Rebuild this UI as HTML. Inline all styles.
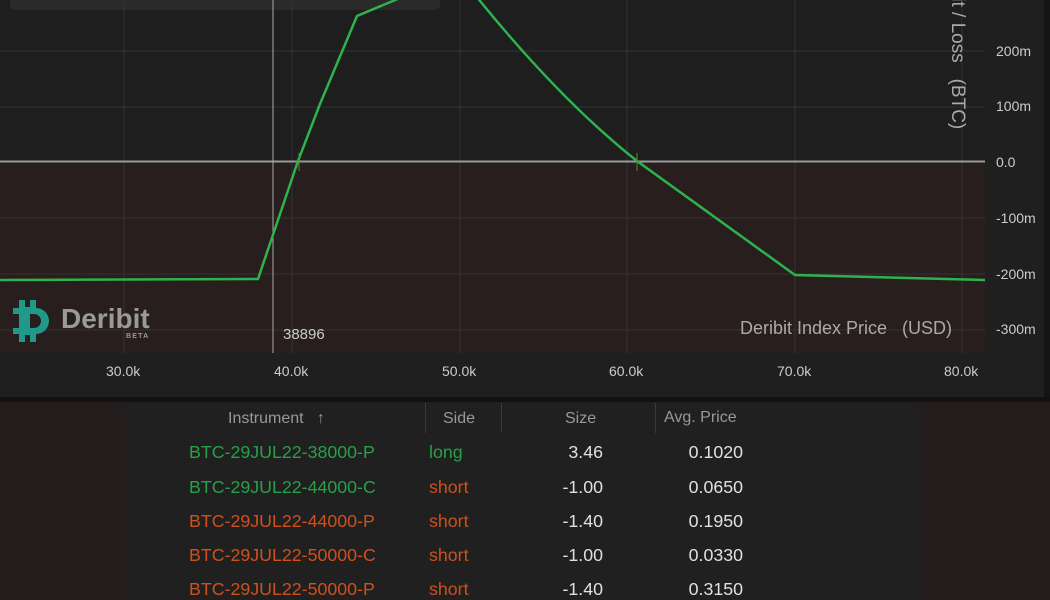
<!DOCTYPE html><html><head><style>
body{margin:0;width:1050px;height:600px;overflow:hidden;background:#241d1d;font-family:"Liberation Sans",sans-serif;position:relative}
.a{position:absolute}
.t{position:absolute;font-size:17.8px;white-space:nowrap}
.n{position:absolute;font-size:17.8px;white-space:nowrap;text-align:right;color:#e0e0e0}
.g{color:#27a04a}.r{color:#d0501c}
</style></head><body>
<div class="a" style="left:0;top:0;width:1044px;height:398px;background:#1f1f1f"></div>
<div class="a" style="left:1044px;top:0;width:6px;height:400px;background:#141414"></div>
<div class="a" style="left:0;top:397px;width:1050px;height:5px;background:#121212"></div>
<svg class="a" style="left:0;top:0" width="1050" height="400">
<rect x="0" y="0" width="985" height="161" fill="#1e1e1e"/>
<rect x="0" y="161" width="985" height="192" fill="#281e1e"/>
<rect x="10" y="-10" width="430" height="20" rx="5" fill="#2a2a2a"/>
<g stroke="#333" stroke-width="1">
<line x1="124" y1="0" x2="124" y2="353"/><line x1="292" y1="0" x2="292" y2="353"/><line x1="460" y1="0" x2="460" y2="353"/><line x1="627" y1="0" x2="627" y2="353"/><line x1="795" y1="0" x2="795" y2="353"/><line x1="962" y1="0" x2="962" y2="353"/>
<line x1="0" y1="51" x2="985" y2="51"/><line x1="0" y1="107" x2="985" y2="107"/><line x1="0" y1="218" x2="985" y2="218"/><line x1="0" y1="274" x2="985" y2="274"/><line x1="0" y1="330" x2="985" y2="330"/>
</g>
<line x1="0" y1="161.5" x2="985" y2="161.5" stroke="#9a9a9a" stroke-width="2"/>
<line x1="273" y1="0" x2="273" y2="353" stroke="#aaa" stroke-width="1"/>
<polyline fill="none" stroke="#2db34e" stroke-width="2.5" points="0,280 258,279 298,161 320,104 357,16 400,-2"/>
<path d="M476,-4 Q560,100 637,161 L795,275 L985,280" fill="none" stroke="#2db34e" stroke-width="2.5"/>
<line x1="299" y1="153" x2="299" y2="171" stroke="#5a8a30"/><line x1="637" y1="153" x2="637" y2="171" stroke="#5a8a30"/>
</svg>
<div class="t" style="left:283px;top:326px;font-size:15px;color:#ccc">38896</div>
<div class="t" style="left:740px;top:318px;font-size:18px;color:#aaa">Deribit Index Price&nbsp;&nbsp;&nbsp;(USD)</div>
<div class="t" style="top:-8px;font-size:19px;color:#aaa;transform:rotate(90deg);transform-origin:0 0;left:968px">fit / Loss&nbsp;&nbsp;&nbsp;(BTC)</div>
<div class="t" style="left:996px;top:43px;font-size:14px;color:#ccc">200m</div>
<div class="t" style="left:996px;top:98px;font-size:14px;color:#ccc">100m</div>
<div class="t" style="left:996px;top:154px;font-size:14px;color:#ccc">0.0</div>
<div class="t" style="left:996px;top:210px;font-size:14px;color:#ccc">-100m</div>
<div class="t" style="left:996px;top:266px;font-size:14px;color:#ccc">-200m</div>
<div class="t" style="left:996px;top:321px;font-size:14px;color:#ccc">-300m</div>
<div class="t" style="left:106px;top:363px;font-size:14px;color:#ccc">30.0k</div>
<div class="t" style="left:274px;top:363px;font-size:14px;color:#ccc">40.0k</div>
<div class="t" style="left:442px;top:363px;font-size:14px;color:#ccc">50.0k</div>
<div class="t" style="left:609px;top:363px;font-size:14px;color:#ccc">60.0k</div>
<div class="t" style="left:777px;top:363px;font-size:14px;color:#ccc">70.0k</div>
<div class="t" style="left:944px;top:363px;font-size:14px;color:#ccc">80.0k</div>
<svg class="a" style="left:13px;top:300px" width="42" height="42"><path d="M6,0h6v7h5v-7h6v8a13,13 0 0 1 0,26v8h-6v-7h-5v7h-6v-8h-6v-6h6v-14h-6v-6h6z M17,14v14h4a7,7 0 0 0 0,-14z" fill="#1f9a8a" fill-rule="evenodd"/></svg>
<div class="t" style="left:61px;top:303px;font-size:28px;font-weight:bold;color:#9a9a9a">Deribit</div>
<div class="t" style="left:126px;top:333px;font-size:7px;font-weight:bold;color:#9a9a9a;letter-spacing:1.2px">BETA</div>
<div class="a" style="left:125px;top:402px;width:790px;height:198px;background:#202020"></div>
<div class="t" style="left:228px;top:410px;font-size:16px;color:#999">Instrument&nbsp;&nbsp;&nbsp;↑</div>
<div class="t" style="left:443px;top:410px;font-size:16px;color:#999">Side</div>
<div class="t" style="left:565px;top:410px;font-size:16px;color:#999">Size</div>
<div class="t" style="left:664px;top:409px;font-size:16px;color:#999">Avg. Price</div>
<div class="a" style="left:425px;top:403px;width:1px;height:30px;background:#3a3a3a"></div>
<div class="a" style="left:501px;top:403px;width:1px;height:30px;background:#3a3a3a"></div>
<div class="a" style="left:655px;top:403px;width:1px;height:30px;background:#3a3a3a"></div>
<div class="t g" style="left:189px;top:442px">BTC-29JUL22-38000-P</div><div class="t g" style="left:429px;top:442px">long</div><div class="n" style="left:503px;width:100px;top:442px">3.46</div><div class="n" style="left:643px;width:100px;top:442px">0.1020</div>
<div class="t g" style="left:189px;top:477px">BTC-29JUL22-44000-C</div><div class="t r" style="left:429px;top:477px">short</div><div class="n" style="left:503px;width:100px;top:477px">-1.00</div><div class="n" style="left:643px;width:100px;top:477px">0.0650</div>
<div class="t r" style="left:189px;top:511px">BTC-29JUL22-44000-P</div><div class="t r" style="left:429px;top:511px">short</div><div class="n" style="left:503px;width:100px;top:511px">-1.40</div><div class="n" style="left:643px;width:100px;top:511px">0.1950</div>
<div class="t r" style="left:189px;top:545px">BTC-29JUL22-50000-C</div><div class="t r" style="left:429px;top:545px">short</div><div class="n" style="left:503px;width:100px;top:545px">-1.00</div><div class="n" style="left:643px;width:100px;top:545px">0.0330</div>
<div class="t r" style="left:189px;top:579px">BTC-29JUL22-50000-P</div><div class="t r" style="left:429px;top:579px">short</div><div class="n" style="left:503px;width:100px;top:579px">-1.40</div><div class="n" style="left:643px;width:100px;top:579px">0.3150</div>
</body></html>
